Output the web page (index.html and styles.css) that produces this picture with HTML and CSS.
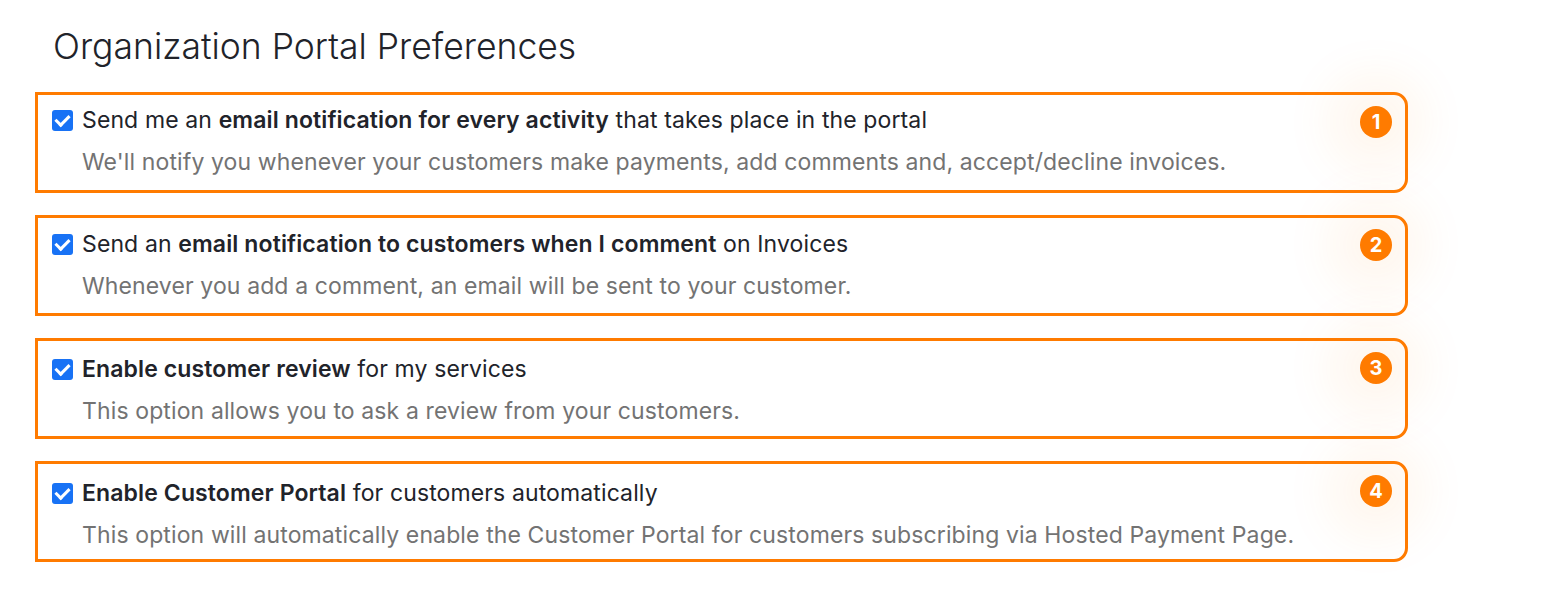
FILE: index.html
```
<html>
<head>
    <title>Organization Portal Preferences</title>
    <link rel="stylesheet" href="styles.css">
</head>
<body>

<div class="page">

    <h2>Organization Portal Preferences</h2>

    <div class="pref">
        <label class="pref-label">
            <input type="checkbox" checked>
            <span>Send me an <b>email notification for every activity</b> that takes place in the portal</span>
        </label>
        <p class="pref-help">We'll notify you whenever your customers make payments, add comments and, accept/decline invoices.</p>
        <span class="badge">1</span>
    </div>

    <div class="pref pref-2">
        <label class="pref-label">
            <input type="checkbox" checked>
            <span>Send an <b>email notification to customers when I comment</b> on Invoices</span>
        </label>
        <p class="pref-help">Whenever you add a comment, an email will be sent to your customer.</p>
        <span class="badge">2</span>
    </div>

    <div class="pref pref-3">
        <label class="pref-label">
            <input type="checkbox" checked>
            <span><b>Enable customer review</b> for my services</span>
        </label>
        <p class="pref-help">This option allows you to ask a review from your customers.</p>
        <span class="badge">3</span>
    </div>

    <div class="pref pref-4">
        <label class="pref-label">
            <input type="checkbox" checked>
            <span><b>Enable Customer Portal</b> for customers automatically</span>
        </label>
        <p class="pref-help">This option will automatically enable the Customer Portal for customers subscribing via Hosted Payment Page.</p>
        <span class="badge">4</span>
    </div>

</div>

</body>
</html>
```

FILE: styles.css
```
body
{
    font-family: 'Inter', 'Liberation Sans', sans-serif;
    background-color: #fff;
    color: #21232a;
    margin: 0;
}

.page
{
    padding: 24px 0 0 35px;
    width: 1373px;
    display: flex;
    flex-direction: column;
    gap: 22px;
}

h2
{
    font-size: 35.5px;
    font-weight: 300;
    margin: 0 0 0 18px;
    line-height: 46px;
}

.pref
{
    position: relative;
    box-sizing: border-box;
    height: 101px;
    border: 3px solid #ff7b00;
    border-radius: 0 14px 14px 0;
    padding: 10px 0 0 14px;
}

.pref-2
{
    padding-top: 11px;
}

.pref-3
{
    padding-top: 13px;
}

.pref-4
{
    padding-top: 14px;
}

.pref-label
{
    display: flex;
    align-items: center;
    gap: 9px;
    font-size: 23px;
    line-height: 30px;
    letter-spacing: 0.12px;
}

.pref-label b
{
    font-weight: 600;
}

.pref-label input
{
    appearance: none;
    width: 21px;
    height: 21px;
    margin: 0;
    border-radius: 3px;
    background-color: #1872f5;
    position: relative;
}

.pref-label input::after
{
    content: '';
    position: absolute;
    left: 6px;
    top: 2px;
    width: 6px;
    height: 11px;
    border: solid #fff;
    border-width: 0 3px 3px 0;
    transform: rotate(45deg);
}

.pref-help
{
    margin: 12px 0 0 30px;
    font-size: 23px;
    line-height: 30px;
    letter-spacing: 0.12px;
    color: #737373;
}

.badge
{
    position: absolute;
    top: 11px;
    right: 13px;
    width: 32px;
    height: 32px;
    border-radius: 50%;
    background-color: #ff7b00;
    color: #fff;
    font-weight: 700;
    font-size: 20px;
    line-height: 32px;
    text-align: center;
    box-shadow: 0 0 50px 30px rgba(255, 140, 30, 0.08);
}
```
